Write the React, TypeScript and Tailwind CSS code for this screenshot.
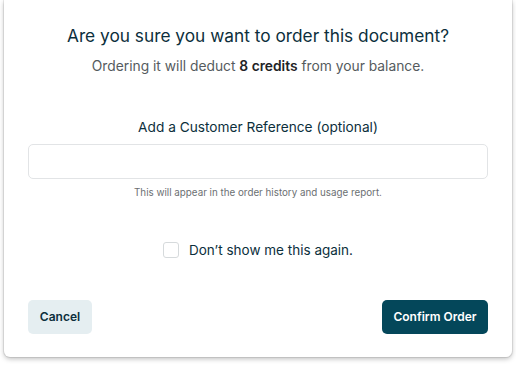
import React from "react";

export default function App() {
  return (
    <div className="w-[516px] h-[366px] bg-white" style={{ fontFamily: "Inter, 'Noto Sans', sans-serif" }}>
      <div className="ml-[4px] w-[508px] bg-white rounded-b-[6px] shadow-[0_2px_5px_rgba(0,0,0,0.25),0_0_0_1px_#ececec] px-6 pt-6 pb-[23px] flex flex-col">
        <h1 className="text-center text-[17.3px] leading-6 text-[#0c2f3c] font-normal">
          Are you sure you want to order this document?
        </h1>
        <p className="mt-2 text-center text-[13.8px] leading-5 text-[#555b5e]">
          Ordering it will deduct <span className="font-semibold text-[#1f2326]">8 credits</span> from your balance.
        </p>
        <label className="mt-[41px] text-center text-[13.7px] leading-5 text-[#0c2f3c]">
          Add a Customer Reference (optional)
        </label>
        <input
          type="text"
          className="mt-[7px] h-[35px] w-full rounded-[5px] border border-[#e2e4e6] bg-white outline-none"
        />
        <p className="mt-[7px] text-center text-[9.8px] leading-[14px] text-[#6b6f72]">
          This will appear in the order history and usage report.
        </p>
        <div className="mt-10 h-5 flex items-center justify-center gap-[10px]">
          <span className="w-[16px] h-[16px] rounded-[3px] border border-[#d6dadc] bg-white" />
          <span className="text-[13.5px] leading-5 text-[#0c2f3c]">Don’t show me this again.</span>
        </div>
        <div className="mt-10 flex justify-between">
          <button className="h-[34px] w-[64px] rounded-[5px] bg-[#e5eef1] text-[12px] font-semibold text-[#0c2f3c]">
            Cancel
          </button>
          <button className="h-[34px] w-[106px] rounded-[5px] bg-[#04475a] text-[12px] font-semibold text-white">
            Confirm Order
          </button>
        </div>
      </div>
    </div>
  );
}
